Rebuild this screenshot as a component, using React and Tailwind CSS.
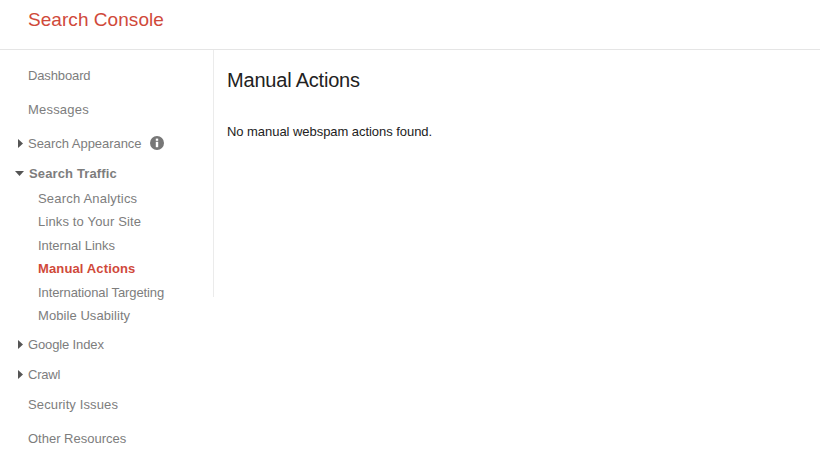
const Closed = () => (
  <svg width="5" height="9" viewBox="0 0 5 9" className="absolute left-[-10px] top-[5px]"><path d="M0 0L5 4.5L0 9Z" fill="#555" /></svg>
);
const Open = () => (
  <svg width="9" height="5" viewBox="0 0 9 5" className="absolute left-[-14px] top-[7px]"><path d="M0 0H9L4.5 5Z" fill="#555" /></svg>
);
const Row = ({ mt = "", label, arrow, extra, bold, tr = "" }) => (
  <div className={`flex items-center pl-[28px] h-[20px] leading-[20px] whitespace-nowrap ${mt} ${tr} ${bold ? "font-bold" : ""}`}>
    <span className={`relative ${bold ? "ml-px" : ""}`}>
      {arrow === "closed" && <Closed />}
      {arrow === "open" && <Open />}
      {label}
    </span>
    {extra}
  </div>
);
const Sub = ({ label, mt, active, tr = "" }) => (
  <div className={`pl-[38px] h-[20px] leading-[20px] whitespace-nowrap ${mt} ${tr} ${active ? "font-bold text-[#d0493a]" : ""}`}>{label}</div>
);
const Info = () => (
  <svg width="14" height="14" viewBox="0 0 14 14" className="ml-[8px] mb-[2px]">
    <circle cx="7" cy="7" r="7" fill="#777" />
    <rect x="5.8" y="2.6" width="2.4" height="2.2" fill="#fff" />
    <rect x="5.8" y="5.8" width="2.4" height="5.4" fill="#fff" />
  </svg>
);
export default function App() {
  return (
    <div className="w-[820px] h-[474px] bg-white overflow-hidden font-['Liberation_Sans',Arial,sans-serif]">
      <header className="h-[50px] border-b border-[#e5e5e5] pl-[28px] pt-[8px]">
        <div className="text-[19px] leading-[24px] tracking-[0.05px] text-[#d0493a]">Search Console</div>
      </header>
      <div className="flex items-start">
        <nav className="w-[214px] h-[247px] shrink-0 border-r border-[#ebebeb] text-[#7d7d7d] text-[13px] pt-[16px]">
          <Row label="Dashboard" tr="tracking-[-0.13px]" />
          <Row label="Messages" mt="mt-[14px]" tr="tracking-[0.2px]" />
          <Row label="Search Appearance" arrow="closed" extra={<Info />} mt="mt-[14px]" tr="tracking-[-0.04px]" />
          <Row label="Search Traffic" arrow="open" bold mt="mt-[10px]" tr="tracking-[0.13px]" />
          <Sub label="Search Analytics" mt="mt-[5px]" tr="tracking-[0.2px]" />
          <Sub label="Links to Your Site" mt="mt-[3px]" tr="tracking-[0.15px]" />
          <Sub label="Internal Links" mt="mt-[4px]" tr="tracking-[-0.03px]" />
          <Sub label="Manual Actions" mt="mt-[3px]" active tr="tracking-[0.13px]" />
          <Sub label="International Targeting" mt="mt-[4px]" tr="tracking-[-0.1px]" />
          <Sub label="Mobile Usability" mt="mt-[3px]" tr="tracking-[0.07px]" />
          <Row label="Google Index" arrow="closed" mt="mt-[9px]" tr="tracking-[-0.13px]" />
          <Row label="Crawl" arrow="closed" mt="mt-[10px]" tr="tracking-[-0.2px]" />
          <Row label="Security Issues" mt="mt-[10px]" tr="tracking-[0.13px]" />
          <Row label="Other Resources" mt="mt-[14px]" />
        </nav>
        <main className="pl-[13px] pt-[17px]">
          <h1 className="text-[20px] leading-[26px] tracking-[-0.2px] text-[#222]">Manual Actions</h1>
          <p className="mt-[29px] text-[13px] leading-[20px] tracking-[-0.05px] text-[#222]">No manual webspam actions found.</p>
        </main>
      </div>
    </div>
  );
}
